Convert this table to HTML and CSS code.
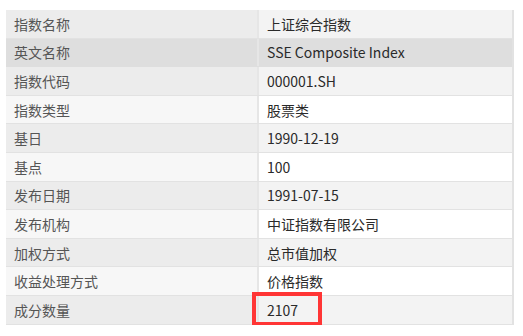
FILE: index.html
```html
<!DOCTYPE html>
<html lang="zh-CN">
<head>
<meta charset="utf-8">
<title>指数信息</title>
<link rel="stylesheet" href="styles.css">
</head>
<body>
<div class="info">
  <div class="row odd"><div class="k">指数名称</div><div class="v">上证综合指数</div></div>
  <div class="row hover"><div class="k">英文名称</div><div class="v">SSE Composite Index</div></div>
  <div class="row odd"><div class="k">指数代码</div><div class="v">000001.SH</div></div>
  <div class="row even"><div class="k">指数类型</div><div class="v">股票类</div></div>
  <div class="row odd"><div class="k">基日</div><div class="v">1990-12-19</div></div>
  <div class="row even"><div class="k">基点</div><div class="v">100</div></div>
  <div class="row odd"><div class="k">发布日期</div><div class="v">1991-07-15</div></div>
  <div class="row even"><div class="k">发布机构</div><div class="v">中证指数有限公司</div></div>
  <div class="row odd"><div class="k">加权方式</div><div class="v">总市值加权</div></div>
  <div class="row even"><div class="k">收益处理方式</div><div class="v">价格指数</div></div>
  <div class="row odd last"><div class="k">成分数量</div><div class="v"><span class="mark">2107</span></div></div>
</div>
</body>
</html>
```
FILE: styles.css
```css
html, body {
  margin: 0;
  padding: 0;
  background: #ffffff;
}
body {
  font-family: "Noto Sans CJK SC", "Noto Sans", sans-serif;
  font-size: 14px;
  color: #333333;
}
.info {
  margin: 10px 0 0 6px;
  width: 508px;
  border-right: 2px solid #e2e2e2;
  box-sizing: border-box;
}
.row {
  display: grid;
  grid-template-columns: 253px 1fr;
  height: 28.6px;
  box-sizing: border-box;
  border-bottom: 1px solid #e2e2e2;
}
.k, .v {
  display: flex;
  align-items: center;
  padding-left: 8px;
  white-space: nowrap;
}
.k {
  color: #555555;
  border-right: 2px solid #e6e6e6;
}
.v {
  position: relative;
  color: #2a2a2a;
}
.odd .k { background: #ececec; }
.odd .v { background: #f3f3f3; }
.even .k { background: #f7f7f7; }
.even .v { background: #ffffff; }
.hover .k, .hover .v { background: #dedede; }
.hover { border-bottom-color: #dedede; }
.mark {
  position: relative;
}
.mark::after {
  content: "";
  position: absolute;
  left: -15px;
  top: -8px;
  width: 62px;
  height: 26px;
  border: 4px solid #ff3535;
}
```
